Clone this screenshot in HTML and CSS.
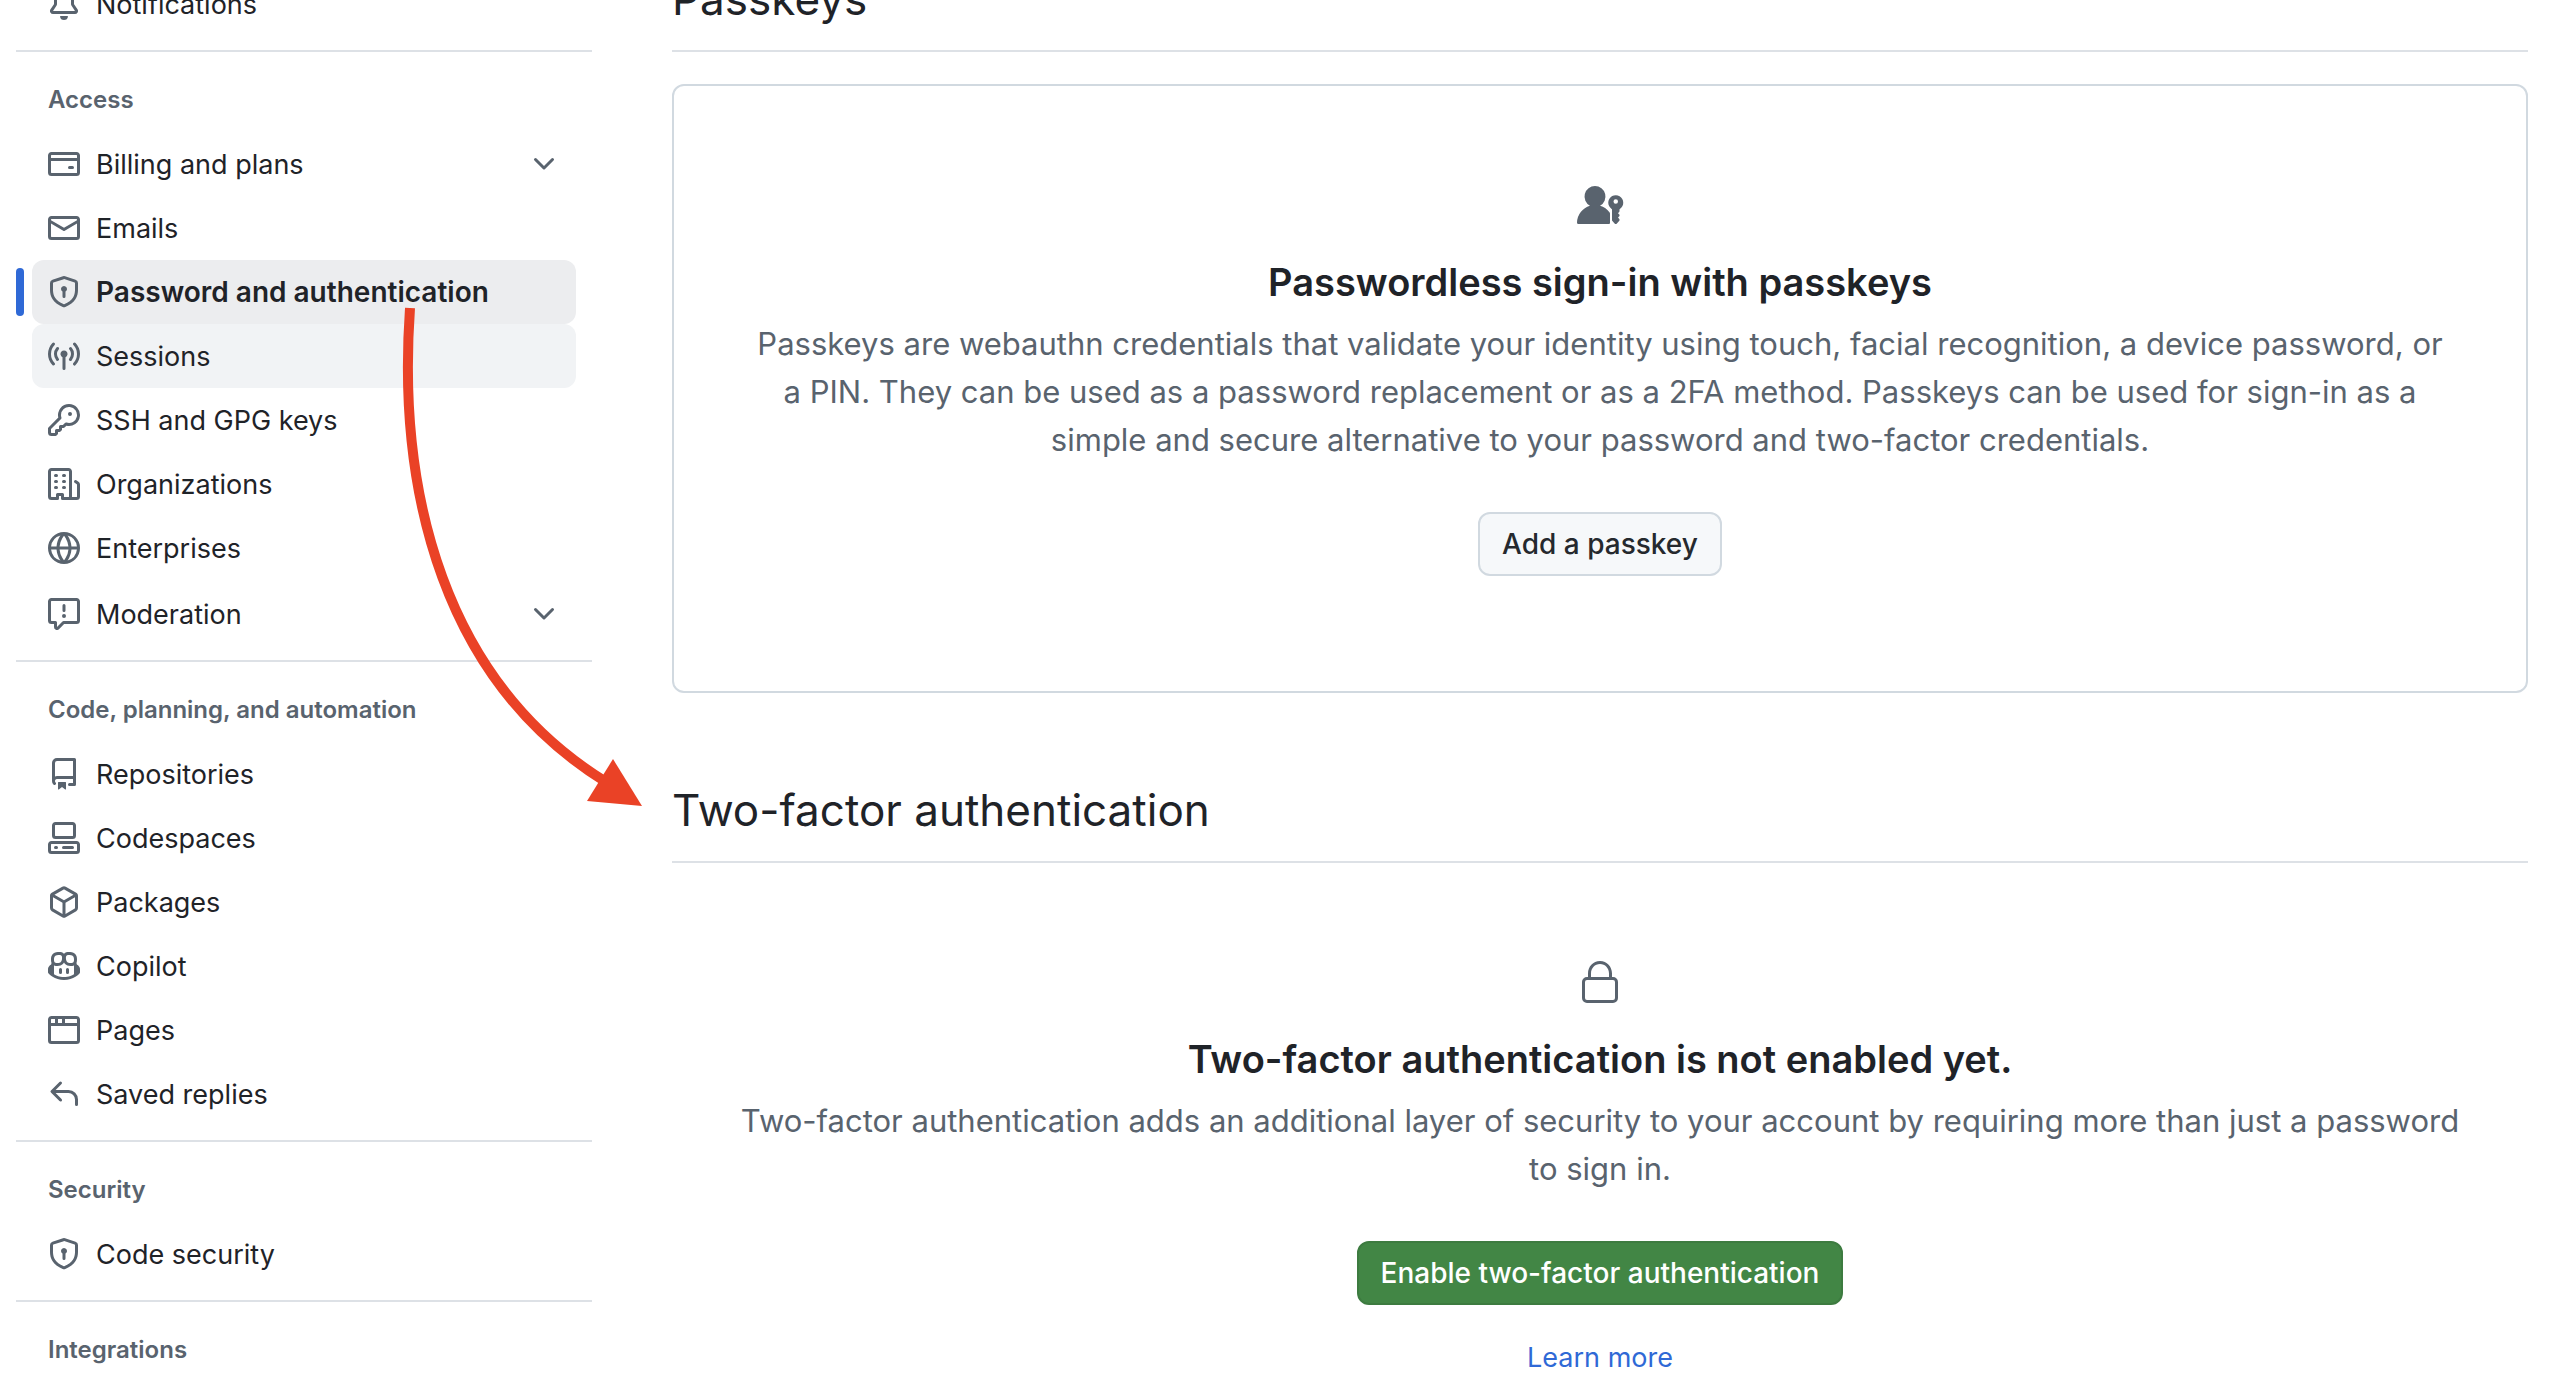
FILE: index.html
```html
<!DOCTYPE html>
<html lang="en">
<head>
<meta charset="utf-8">
<meta name="viewport" content="width=device-width, initial-scale=1">
<title>Password and authentication</title>
<link rel="stylesheet" href="styles.css">
</head>
<body>
<div class="page">
  <nav class="sidebar" aria-label="Settings">
    <ul class="nav-list">
      <li><a class="nav-item" href="#notifications"><svg class="icon" viewBox="0 0 16 16" aria-hidden="true"><path d="M8 16a2 2 0 0 0 1.985-1.75c.017-.137-.097-.25-.235-.25h-3.5c-.138 0-.252.113-.235.25A2 2 0 0 0 8 16ZM3 5a5 5 0 0 1 10 0v2.947c0 .05.015.098.042.139l1.703 2.555A1.519 1.519 0 0 1 13.482 13H2.518a1.516 1.516 0 0 1-1.263-2.36l1.703-2.554A.255.255 0 0 0 3 7.947Zm5-3.5A3.5 3.5 0 0 0 4.5 5v2.947c0 .346-.102.683-.294.97l-1.703 2.556a.017.017 0 0 0-.003.01l.001.006c0 .002.002.004.004.006l.006.004.007.001h10.964l.007-.001.006-.004.004-.006.001-.007a.017.017 0 0 0-.003-.01l-1.703-2.554a1.745 1.745 0 0 1-.294-.97V5A3.5 3.5 0 0 0 8 1.5Z"/></svg><span>Notifications</span></a></li>
    </ul>

    <section class="nav-group">
      <h3 class="nav-title">Access</h3>
      <ul class="nav-list">
        <li><button class="nav-item" type="button" aria-expanded="false"><svg class="icon" viewBox="0 0 16 16" aria-hidden="true"><path d="M10.75 9a.75.75 0 0 0 0 1.5h1.5a.75.75 0 0 0 0-1.5h-1.5Z"/><path d="M0 3.75C0 2.784.784 2 1.75 2h12.5c.966 0 1.75.784 1.75 1.75v8.5A1.75 1.75 0 0 1 14.25 14H1.75A1.75 1.75 0 0 1 0 12.25ZM14.5 6.5h-13v5.75c0 .138.112.25.25.25h12.5a.25.25 0 0 0 .25-.25Zm0-2.75a.25.25 0 0 0-.25-.25H1.75a.25.25 0 0 0-.25.25V5h13Z"/></svg><span class="nav-label">Billing and plans</span><svg class="icon" viewBox="0 0 16 16" aria-hidden="true"><path d="M12.78 5.22a.749.749 0 0 1 0 1.06l-4.25 4.25a.749.749 0 0 1-1.06 0L3.22 6.28a.749.749 0 1 1 1.06-1.06L8 8.939l3.72-3.719a.749.749 0 0 1 1.06 0Z"/></svg></button></li>
        <li><a class="nav-item" href="#emails"><svg class="icon" viewBox="0 0 16 16" aria-hidden="true"><path d="M1.75 2h12.5c.966 0 1.75.784 1.75 1.75v8.5A1.75 1.75 0 0 1 14.25 14H1.75A1.75 1.75 0 0 1 0 12.25v-8.5C0 2.784.784 2 1.75 2ZM1.5 12.251c0 .138.112.25.25.25h12.5a.25.25 0 0 0 .25-.25V5.809L8.38 9.397a.75.75 0 0 1-.76 0L1.5 5.809v6.442Zm13-8.181v-.32a.25.25 0 0 0-.25-.25H1.75a.25.25 0 0 0-.25.25v.32L8 7.88Z"/></svg><span>Emails</span></a></li>
        <li><a class="nav-item is-current" href="#security" aria-current="page"><svg class="icon" viewBox="0 0 16 16" aria-hidden="true"><path d="m8.533.133 5.25 1.68A1.75 1.75 0 0 1 15 3.48V7c0 1.566-.32 3.182-1.303 4.682-.983 1.498-2.585 2.813-5.032 3.855a1.697 1.697 0 0 1-1.33 0c-2.447-1.042-4.049-2.357-5.032-3.855C1.32 10.182 1 8.566 1 7V3.48a1.75 1.75 0 0 1 1.217-1.667l5.25-1.68a1.748 1.748 0 0 1 1.066 0Zm-.61 1.429.001.001-5.25 1.68a.251.251 0 0 0-.174.237V7c0 1.36.275 2.666 1.057 3.859.784 1.194 2.121 2.342 4.366 3.298a.196.196 0 0 0 .154 0c2.245-.957 3.582-2.103 4.366-3.297C13.225 9.666 13.5 8.358 13.5 7V3.48a.25.25 0 0 0-.174-.238l-5.25-1.68a.25.25 0 0 0-.153 0ZM9.5 6.5c0 .536-.286 1.032-.75 1.3v2.45a.75.75 0 0 1-1.5 0V7.8A1.5 1.5 0 1 1 9.5 6.5Z"/></svg><span>Password and authentication</span></a></li>
        <li><a class="nav-item is-hovered" href="#sessions"><svg class="icon" viewBox="0 0 16 16" aria-hidden="true"><path d="M8.75 8.582v5.668a.75.75 0 0 1-1.5 0V8.582a1.75 1.75 0 1 1 1.5 0Zm3.983-7.125a.75.75 0 0 1 1.06.026A7.976 7.976 0 0 1 16 7c0 2.139-.84 4.083-2.207 5.517a.75.75 0 1 1-1.086-1.034A6.474 6.474 0 0 0 14.5 7a6.474 6.474 0 0 0-1.793-4.483.75.75 0 0 1 .026-1.06Zm-9.466 0c.3.286.312.76.026 1.06A6.474 6.474 0 0 0 1.5 7a6.47 6.47 0 0 0 1.793 4.483.75.75 0 0 1-1.086 1.034A7.973 7.973 0 0 1 0 7c0-2.139.84-4.083 2.207-5.517a.75.75 0 0 1 1.06-.026Zm8.556 2.321A4.988 4.988 0 0 1 13 7a4.988 4.988 0 0 1-1.177 3.222.75.75 0 1 1-1.146-.967A3.487 3.487 0 0 0 11.5 7c0-.86-.309-1.645-.823-2.255a.75.75 0 0 1 1.146-.967Zm-6.492.958A3.48 3.48 0 0 0 4.5 7a3.48 3.48 0 0 0 .823 2.255.75.75 0 0 1-1.146.967A4.981 4.981 0 0 1 3 7a4.982 4.982 0 0 1 1.188-3.236.75.75 0 1 1 1.143.972Z"/></svg><span>Sessions</span></a></li>
        <li><a class="nav-item" href="#keys"><svg class="icon" viewBox="0 0 16 16" aria-hidden="true"><path d="M10.5 0a5.499 5.499 0 1 1-1.288 10.848l-.932.932a.749.749 0 0 1-.53.22H7v.75a.749.749 0 0 1-.22.53l-.5.5a.749.749 0 0 1-.53.22H5v.75a.749.749 0 0 1-.22.53l-.5.5a.749.749 0 0 1-.53.22h-2A1.75 1.75 0 0 1 0 14.25v-2c0-.199.079-.389.22-.53l4.932-4.932A5.5 5.5 0 0 1 10.5 0Zm-4 5.5c-.001.431.069.86.205 1.269a.75.75 0 0 1-.181.768L1.5 12.56v1.69c0 .138.112.25.25.25h1.69l.06-.06v-1.19a.75.75 0 0 1 .75-.75h1.19l.06-.06v-1.19a.75.75 0 0 1 .75-.75h1.19l1.023-1.025a.75.75 0 0 1 .768-.18A4 4 0 1 0 6.5 5.5ZM11 6a1 1 0 1 1 0-2 1 1 0 0 1 0 2Z"/></svg><span>SSH and GPG keys</span></a></li>
        <li><a class="nav-item" href="#organizations"><svg class="icon" viewBox="0 0 16 16" aria-hidden="true"><path d="M1.75 16A1.75 1.75 0 0 1 0 14.25V1.75C0 .784.784 0 1.75 0h8.5C11.216 0 12 .784 12 1.75v12.5c0 .085-.006.168-.018.25h2.268a.25.25 0 0 0 .25-.25V8.285a.25.25 0 0 0-.111-.208l-1.055-.703a.749.749 0 1 1 .832-1.248l1.055.703c.487.325.779.871.779 1.456v5.965A1.75 1.75 0 0 1 14.25 16h-3.5a.766.766 0 0 1-.197-.026c-.099.017-.2.026-.303.026h-3a.75.75 0 0 1-.75-.75V14h-1v1.25a.75.75 0 0 1-.75.75Zm-.25-1.75c0 .138.112.25.25.25H4v-1.25a.75.75 0 0 1 .75-.75h2.5a.75.75 0 0 1 .75.75v1.25h2.25a.25.25 0 0 0 .25-.25V1.75a.25.25 0 0 0-.25-.25h-8.5a.25.25 0 0 0-.25.25ZM3.75 6h.5a.75.75 0 0 1 0 1.5h-.5a.75.75 0 0 1 0-1.5ZM3 3.75A.75.75 0 0 1 3.75 3h.5a.75.75 0 0 1 0 1.5h-.5A.75.75 0 0 1 3 3.75Zm4 3A.75.75 0 0 1 7.75 6h.5a.75.75 0 0 1 0 1.5h-.5A.75.75 0 0 1 7 6.75ZM7.75 3h.5a.75.75 0 0 1 0 1.5h-.5a.75.75 0 0 1 0-1.5ZM3 9.75A.75.75 0 0 1 3.75 9h.5a.75.75 0 0 1 0 1.5h-.5A.75.75 0 0 1 3 9.75ZM7.75 9h.5a.75.75 0 0 1 0 1.5h-.5a.75.75 0 0 1 0-1.5Z"/></svg><span>Organizations</span></a></li>
        <li><a class="nav-item" href="#enterprises"><svg class="icon" viewBox="0 0 16 16" aria-hidden="true"><path d="M8 0a8 8 0 1 1 0 16A8 8 0 0 1 8 0ZM5.78 8.75a9.64 9.64 0 0 0 1.363 4.177c.255.426.542.832.857 1.215.245-.296.551-.705.857-1.215A9.64 9.64 0 0 0 10.22 8.75Zm4.44-1.5a9.64 9.64 0 0 0-1.363-4.177c-.307-.51-.612-.919-.857-1.215a9.927 9.927 0 0 0-.857 1.215A9.64 9.64 0 0 0 5.78 7.25Zm-5.944 1.5H1.543a6.507 6.507 0 0 0 4.666 5.5c-.123-.181-.24-.365-.352-.552-.715-1.192-1.437-2.874-1.581-4.948Zm-2.733-1.5h2.733c.144-2.074.866-3.756 1.58-4.948.12-.197.237-.381.353-.552a6.507 6.507 0 0 0-4.666 5.5Zm10.181 1.5c-.144 2.074-.866 3.756-1.58 4.948-.12.197-.237.381-.353.552a6.507 6.507 0 0 0 4.666-5.5Zm2.733-1.5a6.507 6.507 0 0 0-4.666-5.5c.123.181.24.365.353.552.714 1.192 1.436 2.874 1.58 4.948Z"/></svg><span>Enterprises</span></a></li>
        <li class="nav-spaced"><button class="nav-item" type="button" aria-expanded="false"><svg class="icon" viewBox="0 0 16 16" aria-hidden="true"><path d="M0 1.75C0 .784.784 0 1.75 0h12.5C15.216 0 16 .784 16 1.75v9.5A1.75 1.75 0 0 1 14.25 13H8.06l-2.573 2.573A1.458 1.458 0 0 1 3 14.543V13H1.75A1.75 1.75 0 0 1 0 11.25Zm1.75-.25a.25.25 0 0 0-.25.25v9.5c0 .138.112.25.25.25h2a.75.75 0 0 1 .75.75v2.19l2.72-2.72a.749.749 0 0 1 .53-.22h6.5a.25.25 0 0 0 .25-.25v-9.5a.25.25 0 0 0-.25-.25Zm7 2.25v2.5a.75.75 0 0 1-1.5 0v-2.5a.75.75 0 0 1 1.5 0ZM9 9a1 1 0 1 1-2 0 1 1 0 0 1 2 0Z"/></svg><span class="nav-label">Moderation</span><svg class="icon" viewBox="0 0 16 16" aria-hidden="true"><path d="M12.78 5.22a.749.749 0 0 1 0 1.06l-4.25 4.25a.749.749 0 0 1-1.06 0L3.22 6.28a.749.749 0 1 1 1.06-1.06L8 8.939l3.72-3.719a.749.749 0 0 1 1.06 0Z"/></svg></button></li>
      </ul>
    </section>

    <section class="nav-group">
      <h3 class="nav-title">Code, planning, and automation</h3>
      <ul class="nav-list">
        <li><a class="nav-item" href="#repositories"><svg class="icon" viewBox="0 0 16 16" aria-hidden="true"><path d="M2 2.5A2.5 2.5 0 0 1 4.5 0h8.75a.75.75 0 0 1 .75.75v12.5a.75.75 0 0 1-.75.75h-2.5a.75.75 0 0 1 0-1.5h1.75v-2h-8a1 1 0 0 0-.714 1.7.75.75 0 1 1-1.072 1.05A2.495 2.495 0 0 1 2 11.5Zm10.5-1h-8a1 1 0 0 0-1 1v6.708A2.486 2.486 0 0 1 4.5 9h8ZM5 12.25a.25.25 0 0 1 .25-.25h3.5a.25.25 0 0 1 .25.25v3.25a.25.25 0 0 1-.4.2l-1.45-1.087a.249.249 0 0 0-.3 0L5.4 15.7a.25.25 0 0 1-.4-.2Z"/></svg><span>Repositories</span></a></li>
        <li><a class="nav-item" href="#codespaces"><svg class="icon" viewBox="0 0 16 16" aria-hidden="true"><path d="M0 11.25c0-.966.784-1.75 1.75-1.75h12.5c.966 0 1.75.784 1.75 1.75v3A1.75 1.75 0 0 1 14.25 16H1.75A1.75 1.75 0 0 1 0 14.25Zm2-9.5C2 .784 2.784 0 3.75 0h8.5C13.216 0 14 .784 14 1.75v5a1.75 1.75 0 0 1-1.75 1.75h-8.5A1.75 1.75 0 0 1 2 6.75Zm1.75-.25a.25.25 0 0 0-.25.25v5c0 .138.112.25.25.25h8.5a.25.25 0 0 0 .25-.25v-5a.25.25 0 0 0-.25-.25Zm-2 9.5a.25.25 0 0 0-.25.25v3c0 .138.112.25.25.25h12.5a.25.25 0 0 0 .25-.25v-3a.25.25 0 0 0-.25-.25Z"/><path d="M7 12.75a.75.75 0 0 1 .75-.75h4.5a.75.75 0 0 1 0 1.5h-4.5a.75.75 0 0 1-.75-.75Zm-4 0a.75.75 0 0 1 .75-.75h.5a.75.75 0 0 1 0 1.5h-.5a.75.75 0 0 1-.75-.75Z"/></svg><span>Codespaces</span></a></li>
        <li><a class="nav-item" href="#packages"><svg class="icon" viewBox="0 0 16 16" aria-hidden="true"><path d="m8.878.392 5.25 3.045c.54.314.872.89.872 1.514v6.098a1.75 1.75 0 0 1-.872 1.514l-5.25 3.045a1.75 1.75 0 0 1-1.756 0l-5.25-3.045A1.75 1.75 0 0 1 1 11.049V4.951c0-.624.332-1.201.872-1.514L7.122.392a1.75 1.75 0 0 1 1.756 0ZM7.875 1.69l-4.63 2.685L8 7.133l4.755-2.758-4.63-2.685a.248.248 0 0 0-.25 0ZM2.5 5.677v5.372c0 .09.047.171.125.216l4.625 2.683V8.432Zm6.25 8.271 4.625-2.683a.25.25 0 0 0 .125-.216V5.677L8.75 8.432Z"/></svg><span>Packages</span></a></li>
        <li><a class="nav-item" href="#copilot"><svg class="icon" viewBox="0 0 16 16" aria-hidden="true"><path d="M7.998 15.035c-4.562 0-7.873-2.914-7.998-3.749V9.338c.085-.628.677-1.686 1.588-2.065.013-.07.024-.143.036-.218.029-.183.06-.384.126-.612-.201-.508-.254-1.084-.254-1.656 0-.87.128-1.769.693-2.484.579-.733 1.494-1.124 2.724-1.261 1.206-.134 2.262.034 2.944.765.05.053.096.108.139.165.044-.057.094-.112.143-.165.682-.731 1.738-.899 2.944-.765 1.23.137 2.145.528 2.724 1.261.566.715.693 1.614.693 2.484 0 .572-.053 1.148-.254 1.656.066.228.098.429.126.612.012.076.024.148.037.218.924.385 1.522 1.471 1.591 2.095v1.872c0 .766-3.351 3.795-8.002 3.795Zm0-1.485c2.28 0 4.584-1.11 5.002-1.433V7.862l-.023-.116c-.49.21-1.075.291-1.727.291-1.146 0-2.059-.327-2.71-.991A3.222 3.222 0 0 1 8 6.303a3.24 3.24 0 0 1-.544.743c-.65.664-1.563.991-2.71.991-.652 0-1.236-.081-1.727-.291l-.023.116v4.255c.419.323 2.722 1.433 5.002 1.433ZM6.762 2.83c-.193-.206-.637-.413-1.682-.297-1.019.113-1.479.404-1.713.7-.247.312-.369.789-.369 1.554 0 .793.129 1.171.308 1.371.162.181.519.379 1.442.379.853 0 1.339-.235 1.638-.54.315-.322.527-.827.617-1.553.117-.935-.037-1.395-.241-1.614Zm4.155-.297c-1.044-.116-1.488.091-1.681.297-.204.219-.359.679-.242 1.614.091.726.303 1.231.618 1.553.299.305.784.54 1.638.54.922 0 1.28-.198 1.442-.379.179-.2.308-.578.308-1.371 0-.765-.123-1.242-.37-1.554-.233-.296-.693-.587-1.713-.7Z"/><path d="M6.25 9.037a.75.75 0 0 1 .75.75v1.501a.75.75 0 0 1-1.5 0V9.787a.75.75 0 0 1 .75-.75Zm4.25.75v1.501a.75.75 0 0 1-1.5 0V9.787a.75.75 0 0 1 1.5 0Z"/></svg><span>Copilot</span></a></li>
        <li><a class="nav-item" href="#pages"><svg class="icon" viewBox="0 0 16 16" aria-hidden="true"><path d="M0 2.75C0 1.784.784 1 1.75 1h12.5c.966 0 1.75.784 1.75 1.75v10.5A1.75 1.75 0 0 1 14.25 15H1.75A1.75 1.75 0 0 1 0 13.25ZM14.5 6h-13v7.25c0 .138.112.25.25.25h12.5a.25.25 0 0 0 .25-.25Zm-6-3.5v2h6V2.75a.25.25 0 0 0-.25-.25ZM5 2.5v2h2v-2Zm-3.25 0a.25.25 0 0 0-.25.25V4.5h2v-2Z"/></svg><span>Pages</span></a></li>
        <li><a class="nav-item" href="#replies"><svg class="icon" viewBox="0 0 16 16" aria-hidden="true"><path d="M6.78 1.97a.75.75 0 0 1 0 1.06L3.81 6h6.44A4.75 4.75 0 0 1 15 10.75v2.5a.75.75 0 0 1-1.5 0v-2.5a3.25 3.25 0 0 0-3.25-3.25H3.81l2.97 2.97a.749.749 0 0 1-.326 1.275.749.749 0 0 1-.734-.215L1.47 7.28a.75.75 0 0 1 0-1.06l4.25-4.25a.75.75 0 0 1 1.06 0Z"/></svg><span>Saved replies</span></a></li>
      </ul>
    </section>

    <section class="nav-group">
      <h3 class="nav-title">Security</h3>
      <ul class="nav-list">
        <li><a class="nav-item" href="#code-security"><svg class="icon" viewBox="0 0 16 16" aria-hidden="true"><path d="m8.533.133 5.25 1.68A1.75 1.75 0 0 1 15 3.48V7c0 1.566-.32 3.182-1.303 4.682-.983 1.498-2.585 2.813-5.032 3.855a1.697 1.697 0 0 1-1.33 0c-2.447-1.042-4.049-2.357-5.032-3.855C1.32 10.182 1 8.566 1 7V3.48a1.75 1.75 0 0 1 1.217-1.667l5.25-1.68a1.748 1.748 0 0 1 1.066 0Zm-.61 1.429.001.001-5.25 1.68a.251.251 0 0 0-.174.237V7c0 1.36.275 2.666 1.057 3.859.784 1.194 2.121 2.342 4.366 3.298a.196.196 0 0 0 .154 0c2.245-.957 3.582-2.103 4.366-3.297C13.225 9.666 13.5 8.358 13.5 7V3.48a.25.25 0 0 0-.174-.238l-5.25-1.68a.25.25 0 0 0-.153 0ZM9.5 6.5c0 .536-.286 1.032-.75 1.3v2.45a.75.75 0 0 1-1.5 0V7.8A1.5 1.5 0 1 1 9.5 6.5Z"/></svg><span>Code security</span></a></li>
      </ul>
    </section>

    <section class="nav-group">
      <h3 class="nav-title">Integrations</h3>
    </section>
  </nav>

  <main class="content">
    <section>
      <h2 class="heading">Passkeys</h2>
      <div class="card blankslate">
        <svg class="icon-large" viewBox="0 0 24 24" aria-hidden="true"><path d="M9.496 2a5.25 5.25 0 0 0-2.519 9.857A9.006 9.006 0 0 0 .5 20.228a.751.751 0 0 0 .728.772h5.257c3.338.001 6.677.002 10.015 0a.5.5 0 0 0 .5-.5v-4.669a.95.95 0 0 0-.171-.551 9.02 9.02 0 0 0-4.814-3.423A5.25 5.25 0 0 0 9.496 2Z"/><path d="M23.625 10.313c0 1.31-.672 2.464-1.691 3.134a.398.398 0 0 0-.184.33v.886a.372.372 0 0 1-.11.265l-.534.534a.188.188 0 0 0 0 .265l.534.534c.071.07.11.166.11.265v.347a.374.374 0 0 1-.11.265l-.534.534a.188.188 0 0 0 0 .265l.534.534a.37.37 0 0 1 .11.265v.431a.379.379 0 0 1-.097.253l-1.2 1.319a.781.781 0 0 1-1.156 0l-1.2-1.319a.379.379 0 0 1-.097-.253v-5.39a.398.398 0 0 0-.184-.33 3.75 3.75 0 1 1 5.809-3.134ZM21 9.75a1.125 1.125 0 1 0-2.25 0 1.125 1.125 0 0 0 2.25 0Z"/></svg>
        <h3 class="blankslate-title">Passwordless sign-in with passkeys</h3>
        <p class="blankslate-text">Passkeys are webauthn credentials that validate your identity using touch, facial recognition, a device password, or a PIN. They can be used as a password replacement or as a 2FA method. Passkeys can be used for sign-in as a simple and secure alternative to your password and two-factor credentials.</p>
        <button class="btn" type="button">Add a passkey</button>
      </div>
    </section>

    <section>
      <h2 class="heading">Two-factor authentication</h2>
      <div class="blankslate">
        <svg class="icon-large" viewBox="0 0 24 24" aria-hidden="true"><path d="M6 9V7.25C6 3.845 8.503 1 12 1s6 2.845 6 6.25V9h.5a2.5 2.5 0 0 1 2.5 2.5v8a2.5 2.5 0 0 1-2.5 2.5h-13A2.5 2.5 0 0 1 3 19.5v-8A2.5 2.5 0 0 1 5.5 9Zm-1.5 2.5v8a1 1 0 0 0 1 1h13a1 1 0 0 0 1-1v-8a1 1 0 0 0-1-1h-13a1 1 0 0 0-1 1Zm3-4.25V9h9V7.25c0-2.67-1.922-4.75-4.5-4.75-2.578 0-4.5 2.08-4.5 4.75Z"/></svg>
        <h3 class="blankslate-title">Two-factor authentication is not enabled yet.</h3>
        <p class="blankslate-text">Two-factor authentication adds an additional layer of security to your account by requiring more than just a password to sign in.</p>
        <button class="btn btn-primary" type="button">Enable two-factor authentication</button>
        <a class="learn-more" href="#learn">Learn more</a>
      </div>
    </section>
  </main>
</div>

<svg class="arrow" viewBox="0 0 240 510" aria-hidden="true">
  <path class="arrow-line" d="M10 8C-3 194 44 382 206 482"/>
  <path class="arrow-head" d="M213 459 242 506 187 501Z"/>
</svg>
</body>
</html>
```
FILE: styles.css
```css
:root {
  --fg: #1f2328;
  --muted: #59636e;
  --line: #dde1e6;
  --border: #d1d9e0;
  --accent: #2f69d6;
  --green: #428645;
}

* {
  box-sizing: border-box;
}

body {
  margin: 0;
  background: #fff;
  color: var(--fg);
  font-family: Inter, "Liberation Sans", sans-serif;
  font-size: 27px;
  overflow-x: hidden;
}

h2,
h3,
p,
ul {
  margin: 0;
  padding: 0;
}

ul {
  list-style: none;
}

svg {
  fill: currentColor;
}

/* The page is scrolled partway down the settings screen. */
.page {
  display: flex;
  gap: 80px;
  margin-top: -38px;
  padding: 0 48px 0 16px;
}

/* Sidebar */
.sidebar {
  flex: 0 0 576px;
  padding-top: 10px;
}

.nav-group {
  margin-top: 14px;
  border-top: 2px solid var(--line);
}

.nav-title {
  padding: 30px 32px 0;
  color: var(--muted);
  font-size: 24px;
  font-weight: 600;
  line-height: 36px;
}

.nav-title + .nav-list {
  padding-top: 14px;
}

.nav-list {
  padding: 0 16px;
}

.nav-spaced {
  margin-top: 2px;
}

.nav-item {
  position: relative;
  display: flex;
  align-items: center;
  gap: 16px;
  width: 100%;
  min-height: 64px;
  padding: 0 16px;
  border: 0;
  border-radius: 12px;
  background: none;
  color: inherit;
  font: inherit;
  text-align: left;
  text-decoration: none;
}

.nav-label {
  flex: 1;
}

.is-current {
  background: #ecedef;
  font-size: 28px;
  font-weight: 600;
}

.is-current::before {
  content: "";
  position: absolute;
  top: 8px;
  bottom: 8px;
  left: -16px;
  width: 8px;
  border-radius: 4px;
  background: var(--accent);
}

.is-hovered {
  background: #f1f3f5;
}

.icon {
  flex: none;
  width: 32px;
  height: 32px;
  color: var(--muted);
}

/* Main column */
.content {
  display: flex;
  flex: 1;
  flex-direction: column;
  gap: 80px;
  min-width: 0;
}

.heading {
  padding-bottom: 14px;
  border-bottom: 2px solid var(--line);
  font-size: 44px;
  font-weight: 400;
  line-height: 74px;
}

.blankslate {
  display: flex;
  flex-direction: column;
  align-items: center;
  padding: 96px 64px 0;
  text-align: center;
}

.card {
  margin-top: 32px;
  padding: 96px 76px 115px;
  border: 2px solid var(--border);
  border-radius: 12px;
}

.icon-large {
  width: 48px;
  height: 48px;
  color: var(--muted);
}

.blankslate-title {
  margin-top: 24px;
  font-size: 38px;
  font-weight: 600;
  line-height: 56px;
}

.blankslate-text {
  margin-top: 10px;
  color: var(--muted);
  font-size: 31px;
  line-height: 48px;
}

.btn {
  min-height: 64px;
  margin-top: 48px;
  padding: 0 22px;
  border: 2px solid var(--border);
  border-radius: 12px;
  background: #f6f8fa;
  color: #25292e;
  font: inherit;
  font-size: 28px;
  font-weight: 500;
}

.btn-primary {
  border-color: #3d7b40;
  background: var(--green);
  color: #fff;
}

.learn-more {
  margin-top: 32px;
  color: var(--accent);
  line-height: 42px;
  text-decoration: none;
}

/* Callout arrow drawn over the page */
.arrow {
  position: absolute;
  top: 300px;
  left: 400px;
  width: 240px;
  height: 510px;
  overflow: visible;
  pointer-events: none;
}

.arrow-line {
  fill: none;
  stroke: #ea4226;
  stroke-width: 10;
}

.arrow-head {
  fill: #ea4226;
}
```
